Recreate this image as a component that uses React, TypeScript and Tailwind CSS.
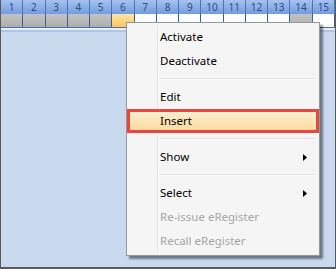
import type { ReactNode } from 'react'

const FONT = { fontFamily: '"Noto Sans", "Open Sans", Arial, sans-serif' }

// state of the second header row, one entry per column
const cells = ['g', 'g', 'g', 'g', 'g', 'o', 'w', 'w', 'w', 'w', 'w', 'w', 'w', 'g', 'w']

function cellClass(kind: string) {
  if (kind === 'g') return 'bg-gradient-to-b from-[#c2c2c2] to-[#aeaeae]'
  if (kind === 'o') return 'bg-gradient-to-b from-[#fde6a8] to-[#fcc457]'
  return 'bg-white'
}

function Gutter({ hidden }: { hidden?: boolean }) {
  return (
    <div
      className={
        hidden
          ? 'w-[32px] self-stretch shrink-0'
          : 'w-[32px] self-stretch shrink-0 border-r border-white shadow-[inset_-1px_0_0_#e2e3e3]'
      }
    />
  )
}

function Item({
  label,
  disabled,
  sub,
}: {
  label: string
  disabled?: boolean
  sub?: boolean
}) {
  return (
    <div className="flex h-6 items-center">
      <Gutter />
      <span className={`flex-1 pl-[1px] text-[11.5px] ${disabled ? 'text-[#a6a6a6]' : 'text-black'}`}>
        {label}
      </span>
      {sub && (
        <svg width="4" height="7" viewBox="0 0 4 7" className="mr-[12px]">
          <polygon points="0,0 4,3.5 0,7" fill="#000" />
        </svg>
      )}
    </div>
  )
}

function Separator() {
  return (
    <div className="flex h-3 items-center">
      <Gutter />
      <div className="mr-[3px] flex-1">
        <div className="h-px bg-[#e0e0e0]" />
        <div className="h-px bg-white" />
      </div>
    </div>
  )
}

function Highlighted({ children }: { children: ReactNode }) {
  return (
    <div className="relative flex h-6 items-center">
      <div className="absolute inset-0 border border-[#f2cf86] bg-gradient-to-b from-[#fdf0d4] to-[#fad998]" />
      <div className="relative flex flex-1 items-center">
        <Gutter hidden />
        <span className="flex-1 pl-[1px] text-[11.5px] text-black">{children}</span>
      </div>
      {/* annotation box */}
      <div className="pointer-events-none absolute inset-0 border-[3px] border-[#e8473d]" />
    </div>
  )
}

export default function App() {
  return (
    <div
      className="relative h-[269px] w-[336px] overflow-hidden border-x border-b-2 border-[#5a5a5a] bg-[#c9d9ee]"
      style={FONT}
    >
      {/* column header */}
      <div className="grid grid-cols-15 h-[14px] bg-gradient-to-b from-[#a5c2f0] to-[#739cdd]">
        {Array.from({ length: 15 }, (_, i) => (
          <div
            key={i}
            className="flex items-center justify-center border-r border-[#4f74b4] text-[10px] leading-none text-[#2c4c8a]"
          >
            {i + 1}
          </div>
        ))}
      </div>
      <div className="grid grid-cols-15 h-[14px] border-b border-[#4d6fae]">
        {cells.map((c, i) => (
          <div key={i} className={`border-r border-[#3d5d99] ${cellClass(c)}`} />
        ))}
      </div>
      <div className="h-[2px] bg-[#e6eef9]" />
      <div className="h-[2px] bg-[#abc5ed]" />

      {/* context menu */}
      <div className="absolute left-[125px] top-[22px] w-[194px] border border-[#979797] bg-[#f5f5f5] py-[2px] shadow-[3px_3px_2px_rgba(0,0,0,0.45)]">
        <Item label="Activate" />
        <Item label="Deactivate" />
        <Separator />
        <Item label="Edit" />
        <Highlighted>Insert</Highlighted>
        <Separator />
        <Item label="Show" sub />
        <Separator />
        <Item label="Select" sub />
        <Item label="Re-issue eRegister" disabled />
        <Item label="Recall eRegister" disabled />
      </div>
    </div>
  )
}
